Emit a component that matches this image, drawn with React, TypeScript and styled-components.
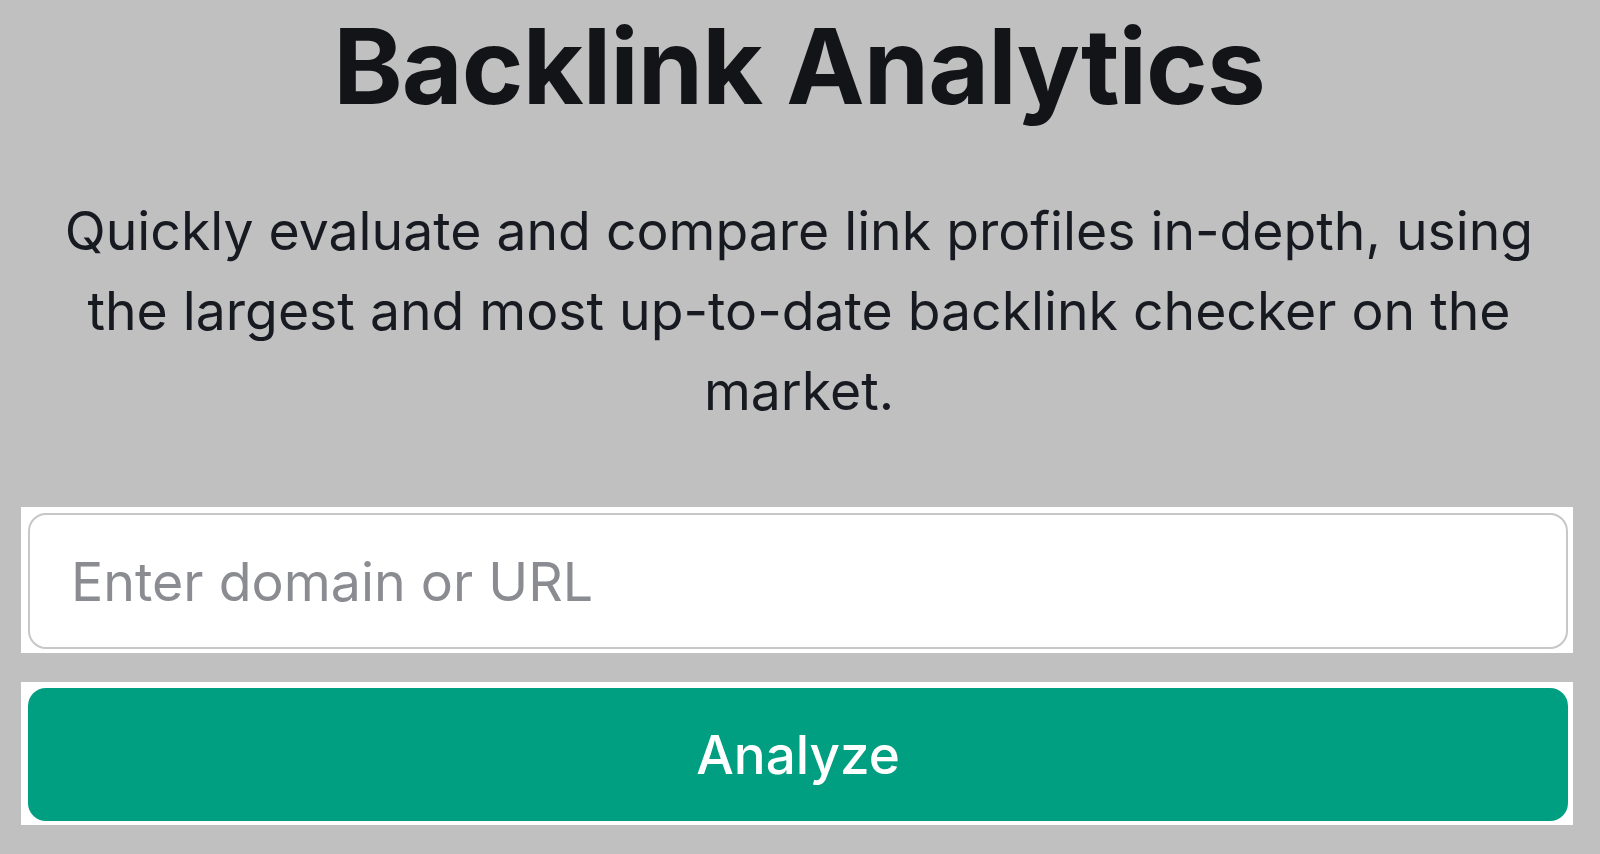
import React from "react";
import styled, { createGlobalStyle } from "styled-components";

const GlobalStyle = createGlobalStyle`
  html, body {
    margin: 0;
    padding: 0;
    background: #c0c0c0;
  }
  * { box-sizing: border-box; }
`;

const Page = styled.main`
  min-height: 854px;
  background: #c0c0c0;
  display: flex;
  flex-direction: column;
  align-items: stretch;
  padding: 0 25px 0 23px;
  font-family: Inter, "Noto Sans", sans-serif;
`;

const Title = styled.h1`
  margin: 0;
  padding-top: 6px;
  text-align: center;
  font-family: Inter, sans-serif;
  font-weight: 700;
  font-size: 105px;
  line-height: 120px;
  letter-spacing: -0.9px;
  color: #131418;
`;

const Lead = styled.p`
  margin: 65px auto 0;
  max-width: 1490px;
  text-align: center;
  font-family: Inter, sans-serif;
  font-weight: 400;
  font-size: 53.5px;
  line-height: 80px;
  color: #171a21;
`;

const Highlight = styled.div<{ $top: number }>`
  margin: ${(p) => p.$top}px 2px 0 -2px;
  background: #ffffff;
  padding: 6px 5px 4px 7px;
`;

const Field = styled.input`
  display: block;
  width: 100%;
  height: 136px;
  border: 2px solid #c6c7c9;
  border-radius: 18px;
  padding: 0 41px;
  font-family: Inter, sans-serif;
  font-size: 53.7px;
  color: #171a21;
  background: #fff;
  outline: none;
  &::placeholder {
    color: #8a8c91;
  }
`;

const Button = styled.button`
  display: block;
  width: 100%;
  height: 133px;
  border: none;
  border-radius: 18px;
  background: #009f81;
  color: #ffffff;
  font-family: Inter, sans-serif;
  font-weight: 500;
  font-size: 53px;
  cursor: pointer;
`;

export default function App() {
  return (
    <>
      <GlobalStyle />
      <Page>
        <Title>Backlink Analytics</Title>
        <Lead>
          Quickly evaluate and compare link profiles in-depth, using the largest and most
          up-to-date backlink checker on the market.
        </Lead>
        <Highlight $top={76}>
          <Field placeholder="Enter domain or URL" />
        </Highlight>
        <Highlight $top={29}>
          <Button>Analyze</Button>
        </Highlight>
      </Page>
    </>
  );
}
